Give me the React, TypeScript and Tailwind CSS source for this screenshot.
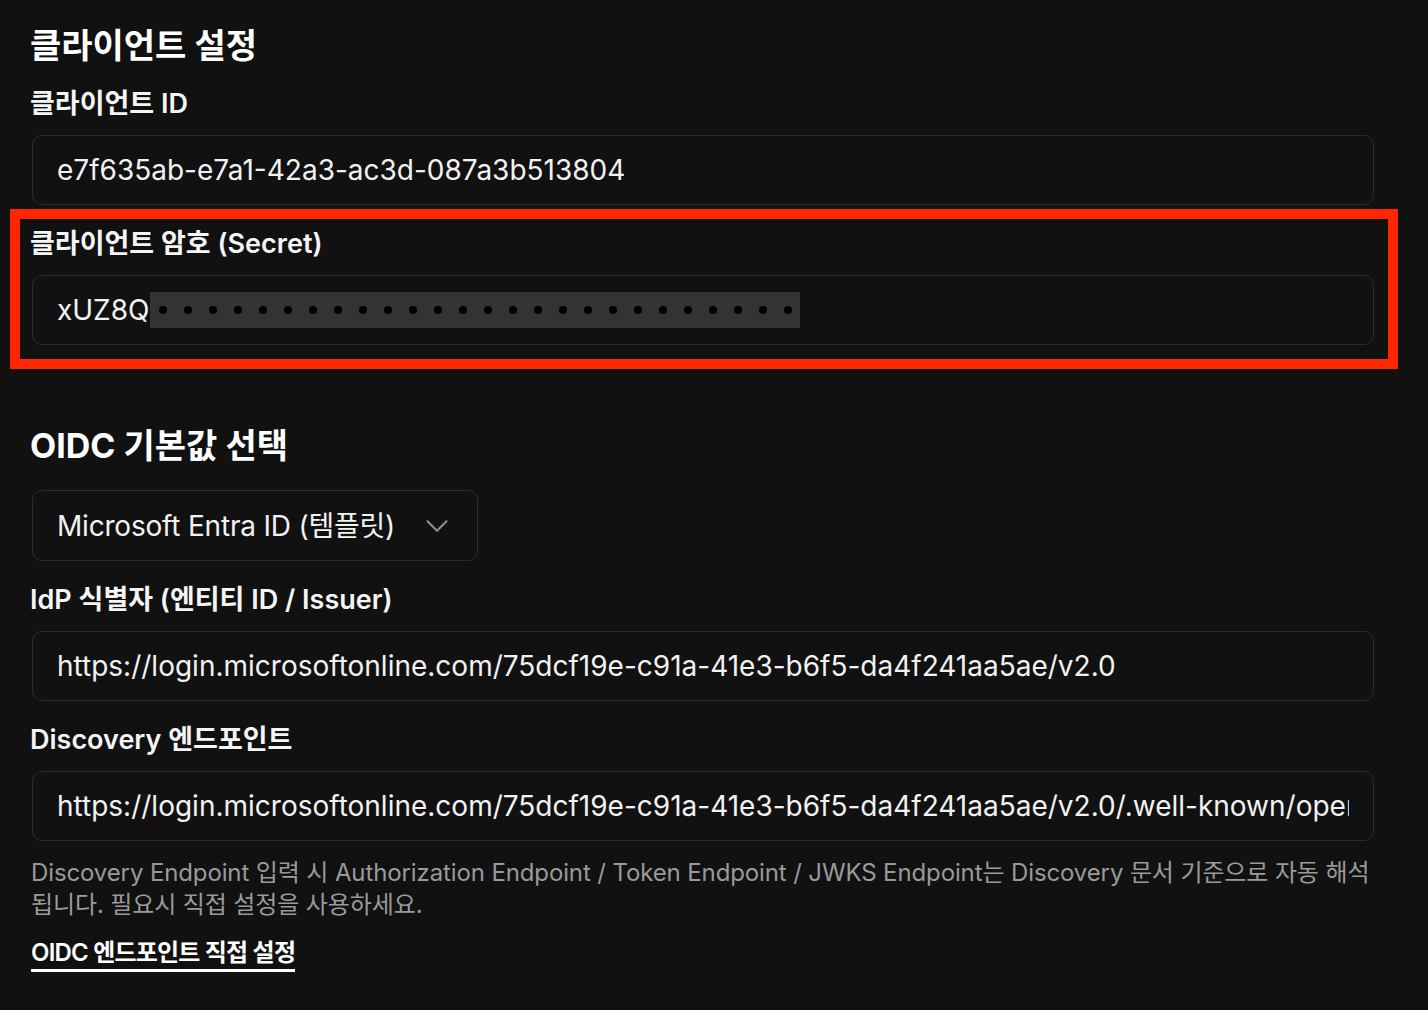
import { ChevronDown } from "lucide-react";

const fieldBox =
  "mt-[11px] h-[70px] w-full rounded-[10px] border border-[#2c2c2c] bg-[#111111] px-[24px] text-[28px] text-[#f2f2f2] outline-none";

function Label({ children }: { children: React.ReactNode }) {
  return <p className="-ml-[2px] text-[27px] font-semibold leading-[40px] text-[#f5f5f5]">{children}</p>;
}

function TextField({ label, value }: { label: string; value: string }) {
  return (
    <div className="mt-[19px]">
      <Label>{label}</Label>
      <input readOnly value={value} className={fieldBox} />
    </div>
  );
}

export default function App() {
  const dots = Array.from({ length: 26 });

  return (
    <div className="min-h-screen bg-[#111111] pl-[32px] pr-[54px] pt-[22px] pb-10 font-['Inter','Noto_Sans_CJK_KR',sans-serif]">
      <h2 className="-ml-[2px] text-[34px] font-bold leading-[48px] text-white">클라이언트 설정</h2>

      <div className="mt-[14px]">
        <Label>클라이언트 ID</Label>
        <input readOnly value="e7f635ab-e7a1-42a3-ac3d-087a3b513804" className={fieldBox} />
      </div>

      {/* Secret field, annotated */}
      <div className="relative mt-[19px]">
        <Label>클라이언트 암호 (Secret)</Label>
        <div className={`${fieldBox} flex items-center`}>
          <span>xUZ8Q</span>
          <span className="ml-px flex h-[36px] items-center bg-[#333333]">
            {dots.map((_, i) => (
              <span key={i} className="flex w-[25px] justify-center">
                <span className="h-[8px] w-[8px] rounded-full bg-black" />
              </span>
            ))}
          </span>
        </div>
        <div className="pointer-events-none absolute -top-[15px] -right-[24px] -bottom-[24px] -left-[22px] border-[10px] border-[#ff2600]" />
      </div>

      <h2 className="-ml-[2px] mt-[77px] text-[34px] font-bold leading-[48px] text-white">OIDC 기본값 선택</h2>

      <button
        type="button"
        className="mt-[20px] flex h-[71px] w-[446px] items-center justify-between rounded-[10px] border border-[#2c2c2c] pl-[24px] pr-[21px] text-[28px] tracking-[-0.2px] text-[#f2f2f2]"
      >
        <span>Microsoft Entra ID (템플릿)</span>
        <ChevronDown size={38} strokeWidth={1.4} className="text-[#8a8a8a]" />
      </button>

      <TextField
        label="IdP 식별자 (엔티티 ID / Issuer)"
        value="https://login.microsoftonline.com/75dcf19e-c91a-41e3-b6f5-da4f241aa5ae/v2.0"
      />
      <TextField
        label="Discovery 엔드포인트"
        value="https://login.microsoftonline.com/75dcf19e-c91a-41e3-b6f5-da4f241aa5ae/v2.0/.well-known/openid-configuration"
      />

      <p className="-ml-px mt-[16px] text-[24px] leading-[32px] tracking-[-0.12px] text-[#9a9a9a]">
        Discovery Endpoint 입력 시 Authorization Endpoint / Token Endpoint / JWKS Endpoint는 Discovery 문서 기준으로 자동
        해석됩니다. 필요시 직접 설정을 사용하세요.
      </p>

      <a
        href="#"
        className="-ml-px mt-[16px] inline-block border-b-[3px] border-white text-[24px] font-semibold leading-[32px] tracking-[-0.8px] text-white"
      >
        OIDC 엔드포인트 직접 설정
      </a>
    </div>
  );
}
